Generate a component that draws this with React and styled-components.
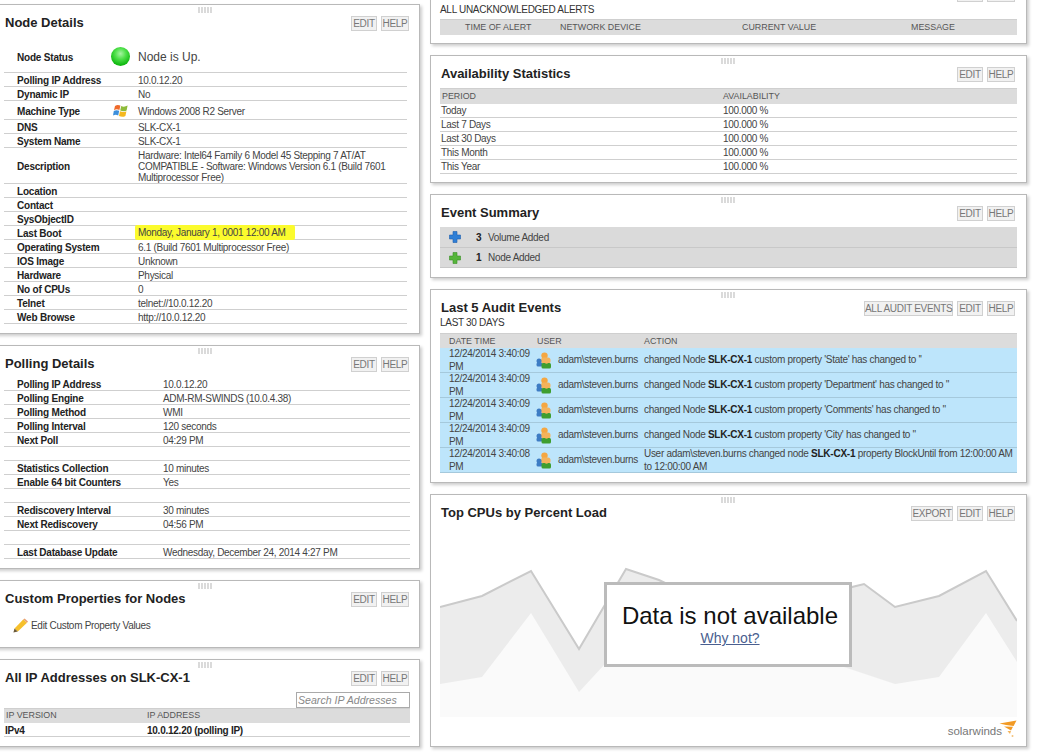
import React from 'react';
import styled, { createGlobalStyle } from 'styled-components';

const GlobalStyle = createGlobalStyle`
  html, body {
    margin: 0;
    padding: 0;
    height: 100%;
    overflow: hidden;
    background: #fff;
  }
  body {
    font-family: "Liberation Sans", Arial, sans-serif;
    font-size: 10px;
    letter-spacing: -0.3px;
    color: #333;
  }
`;

const Page = styled.div`
  display: flex;
  align-items: flex-start;
  gap: 10px;
  width: 1061px;
  height: 754px;
  overflow: hidden;
`;

const LeftColumn = styled.div`
  display: flex;
  flex-direction: column;
  gap: 11px;
  flex: none;
  width: 428px;
  margin: 4px 0 0 -8px;
`;

const RightColumn = styled.div`
  display: flex;
  flex-direction: column;
  gap: 11px;
  flex: none;
  width: 597px;
  margin-top: -25px;
`;

const Panel = styled.section`
  position: relative;
  box-sizing: border-box;
  height: ${(p) => p.$height}px;
  padding: 0 9px 0 ${(p) => (p.$narrow ? 11 : 9)}px;
  background: #fff;
  border: 1px solid #b9b9b9;
  box-shadow: 2px 2px 3px rgba(0, 0, 0, 0.2);
`;

const Grip = styled.div`
  position: absolute;
  top: 2px;
  left: 50%;
  width: 15px;
  height: 6px;
  margin-left: -8px;
  background-image: radial-gradient(circle at 1px 1px, #c6c6c6 0.6px, transparent 0.9px);
  background-size: 3px 2px;
`;

const Header = styled.header`
  display: flex;
  align-items: center;
  justify-content: space-between;
  height: 15px;
  padding-top: 11px;
`;

const Title = styled.h2`
  margin: -3px 0 0 1px;
  font-size: 13px;
  line-height: 15px;
  font-weight: bold;
  letter-spacing: 0;
  color: #222;
`;

const Buttons = styled.div`
  display: flex;
  gap: 4px;
  margin-right: ${(p) => (p.$inset ? 2 : 1)}px;
`;

const Button = styled.span`
  box-sizing: border-box;
  width: ${(p) => p.$width}px;
  height: 15px;
  font-size: 10px;
  line-height: 13px;
  letter-spacing: -0.3px;
  text-align: center;
  white-space: nowrap;
  color: #777;
  background: #f1f1f1;
  border: 1px solid #d0d0d0;
`;

const Subtitle = styled.div`
  margin-top: ${(p) => p.$top ?? 2}px;
  line-height: 12px;
  color: #333;
`;

const Table = styled.div`
  margin-top: ${(p) => p.$top || 0}px;
  margin-right: ${(p) => p.$right || 0}px;
`;

const HeadRow = styled.div`
  display: grid;
  grid-template-columns: ${(p) => p.$cols};
  align-items: center;
  box-sizing: border-box;
  height: ${(p) => p.$height || 15}px;
  padding-bottom: ${(p) => (p.$lift ? 2 : 0)}px;
  background: #dcdcdc;
  border-top: 1px solid #cfcfcf;
  font-size: 8.9px;
  letter-spacing: 0;
  color: #555;
`;

const HeadCell = styled.span`
  padding-left: ${(p) => p.$pad || 0}px;
  white-space: nowrap;
`;

const Row = styled.div`
  display: grid;
  grid-template-columns: ${(p) => p.$cols};
  align-items: center;
  box-sizing: border-box;
  height: ${(p) => p.$height || 14}px;
  padding-top: ${(p) => (p.$flat ? 0 : 2)}px;
  border-bottom: 1px solid #cfcfcf;
  line-height: 11px;
`;

const Label = styled.span`
  padding-left: 13px;
  font-weight: bold;
  letter-spacing: -0.2px;
  color: #222;
  white-space: nowrap;
`;

const Value = styled.span`
  color: #444;
`;

const StatusText = styled.span`
  font-size: 12px;
  letter-spacing: 0;
  color: #444;
`;

const Plain = styled.span`
  color: #444;
  padding-left: ${(p) => p.$pad || 0}px;
  white-space: nowrap;
`;

const Bold = styled.span`
  color: #222;
  font-weight: bold;
  letter-spacing: -0.25px;
`;

const Highlight = styled.span`
  display: block;
  width: fit-content;
  margin: -3px 0 -1px -3px;
  padding: 2px 9px 2px 3px;
  background: #fbfb2d;
  border-radius: 2px;
  white-space: nowrap;
`;

const IconCell = styled.span`
  display: flex;
  padding-left: ${(p) => p.$pad || 0}px;
`;

const Orb = styled.span`
  display: block;
  width: 19px;
  height: 19px;
  margin-top: -1px;
  border-radius: 50%;
  background: radial-gradient(circle at 50% 35%, #a6f3a2 0, #4fe04a 35%, #14bb14 70%, #0c9c0c 100%);
`;

const EditLink = styled.div`
  display: flex;
  align-items: center;
  gap: 3px;
  margin: 11px 0 0 9px;
  color: #444;
`;

const SearchRow = styled.div`
  display: flex;
  justify-content: flex-end;
  margin-top: 6px;
`;

const Search = styled.div`
  box-sizing: border-box;
  width: 114px;
  height: 16px;
  padding-left: 1px;
  border: 1px solid #aaa;
  font-size: 10.6px;
  line-height: 14px;
  font-style: italic;
  letter-spacing: 0;
  color: #888;
`;

const EventList = styled.div`
  margin-top: 6px;
  background: #dadada;
`;

const EventRow = styled.div`
  display: grid;
  grid-template-columns: 36px 12px 1fr;
  align-items: center;
  box-sizing: border-box;
  height: 20.5px;
  padding-top: 1px;
  border-bottom: 1px solid #c8c8c8;
  color: #444;
`;

const EventIcon = styled.span`
  display: flex;
  padding-left: 9px;
`;

const AuditRow = styled.div`
  display: grid;
  grid-template-columns: 96px 22px 86px 1fr;
  align-items: center;
  box-sizing: border-box;
  height: 25px;
  background: #bde5fb;
  border-bottom: 1px solid #a5c9dc;
  line-height: 12.5px;
  color: #444;
`;

const AuditCell = styled.span`
  padding-left: ${(p) => p.$pad || 0}px;
`;

const Chart = styled.div`
  position: relative;
  height: 157px;
  margin-top: 39px;
`;

const ChartSvg = styled.svg`
  display: block;
  width: 100%;
  height: 100%;
`;

const Message = styled.div`
  position: absolute;
  top: 22px;
  left: 164px;
  box-sizing: border-box;
  width: 248px;
  height: 85px;
  padding: 17px 0 0 4px;
  background: #fff;
  border: 3px solid #bbb;
  text-align: center;
  letter-spacing: 0;
`;

const MessageTitle = styled.div`
  font-size: 24px;
  line-height: 28px;
  color: #111;
`;

const WhyNot = styled.a`
  font-size: 14px;
  line-height: 16px;
  color: #4a5f8f;
  text-decoration: underline;
`;

const Logo = styled.div`
  display: flex;
  align-items: flex-start;
  justify-content: flex-end;
  margin-top: 3px;
`;

const LogoText = styled.span`
  margin: 4px -3px 0 0;
  font-size: 11.5px;
  line-height: 14px;
  letter-spacing: 0;
  color: #777;
`;

const WindowsIcon = () => (
  <svg width="16" height="16" viewBox="0 0 16 16">
    <path d="M2 3 C4 1.6 5.5 1.8 7.4 2.6 L6.4 7 C4.6 6.2 3 6 1 7.2 Z" fill="#ef6a2a" />
    <path d="M8.2 3 C10 4 12 4 14.6 2.6 L13.6 7.4 C11.4 8.6 9.4 8.4 7.2 7.4 Z" fill="#8ebb3a" />
    <path d="M0.8 8 C2.8 6.8 4.4 7 6.2 7.8 L5.2 12.4 C3.4 11.6 1.8 11.6 0 12.6 Z" fill="#3c8fdc" />
    <path d="M7 8.2 C9.2 9.2 11.2 9.4 13.4 8.2 L12.4 13 C10.2 14.2 8 14 6 13 Z" fill="#f5b81e" />
  </svg>
);

const PlusIcon = ({ fill, edge }) => (
  <svg width="12" height="12" viewBox="0 0 12 12">
    <path d="M4 0.5 H8 V4 H11.5 V8 H8 V11.5 H4 V8 H0.5 V4 H4 Z" fill={fill} stroke={edge} strokeWidth="0.6" />
  </svg>
);

const PencilIcon = () => (
  <svg width="15" height="15" viewBox="0 0 15 15">
    <path d="M1.5 10.5 L10.2 1.6 L14 4.8 L4.8 13.6 Z" fill="#f6c02c" />
    <path d="M10.2 1.6 L11.6 0.4 L15 3.4 L14 4.8 Z" fill="#e8a070" />
    <path d="M1.5 10.5 L0.4 14.6 L4.8 13.6 Z" fill="#6b5a3a" />
  </svg>
);

const UserIcon = () => (
  <svg width="16" height="17" viewBox="0 0 16 17">
    <circle cx="8.5" cy="3.6" r="3.2" fill="#f5a742" />
    <rect x="5" y="5.5" width="9.5" height="6" rx="2.5" fill="#f3b35c" />
    <circle cx="3" cy="9" r="2.5" fill="#3d7cc4" />
    <rect x="0.5" y="10.5" width="6" height="4" rx="1.5" fill="#3d7cc4" />
    <rect x="5.5" y="11" width="9.5" height="5.5" rx="1.5" fill="#3f9e2e" />
    <circle cx="10.5" cy="9.8" r="2" fill="#f5b25a" />
  </svg>
);

const SolarwindsMark = () => (
  <svg width="18" height="18" viewBox="0 0 18 18">
    <path d="M0.5 3.5 L17.5 0.5 L14.6 6 L7 5 Z" fill="#f29a24" />
    <path d="M5 6.5 L14 6.8 L12 10.5 Z" fill="#f29a24" />
    <path d="M8.5 11 L12 11 L11 14 Z" fill="#f5b45c" />
    <circle cx="13.5" cy="16" r="1" fill="#f5c27a" />
  </svg>
);

const nodeCols = '107px 27px 1fr';
const nodeRows = [
  { label: 'Polling IP Address', value: '10.0.12.20' },
  { label: 'Dynamic IP', value: 'No' },
  { label: 'Machine Type', value: 'Windows 2008 R2 Server', icon: <WindowsIcon />, height: 19 },
  { label: 'DNS', value: 'SLK-CX-1' },
  { label: 'System Name', value: 'SLK-CX-1' },
  {
    label: 'Description',
    value: 'Hardware: Intel64 Family 6 Model 45 Stepping 7 AT/AT COMPATIBLE - Software: Windows Version 6.1 (Build 7601 Multiprocessor Free)',
    height: 36,
  },
  { label: 'Location' },
  { label: 'Contact' },
  { label: 'SysObjectID' },
  { label: 'Last Boot', value: <Highlight>Monday, January 1, 0001 12:00 AM</Highlight> },
  { label: 'Operating System', value: '6.1 (Build 7601 Multiprocessor Free)' },
  { label: 'IOS Image', value: 'Unknown' },
  { label: 'Hardware', value: 'Physical' },
  { label: 'No of CPUs', value: '0' },
  { label: 'Telnet', value: 'telnet://10.0.12.20' },
  { label: 'Web Browse', value: 'http://10.0.12.20' },
];

const pollingRows = [
  ['Polling IP Address', '10.0.12.20'],
  ['Polling Engine', 'ADM-RM-SWINDS (10.0.4.38)'],
  ['Polling Method', 'WMI'],
  ['Polling Interval', '120 seconds'],
  ['Next Poll', '04:29 PM'],
  [],
  ['Statistics Collection', '10 minutes'],
  ['Enable 64 bit Counters', 'Yes'],
  [],
  ['Rediscovery Interval', '30 minutes'],
  ['Next Rediscovery', '04:56 PM'],
  [],
  ['Last Database Update', 'Wednesday, December 24, 2014 4:27 PM'],
];

const periods = ['Today', 'Last 7 Days', 'Last 30 Days', 'This Month', 'This Year'];

const audits = [
  { time: '12/24/2014 3:40:09 PM', text: <>changed Node <Bold>SLK-CX-1</Bold> custom property 'State' has changed to ''</> },
  { time: '12/24/2014 3:40:09 PM', text: <>changed Node <Bold>SLK-CX-1</Bold> custom property 'Department' has changed to ''</> },
  { time: '12/24/2014 3:40:09 PM', text: <>changed Node <Bold>SLK-CX-1</Bold> custom property 'Comments' has changed to ''</> },
  { time: '12/24/2014 3:40:09 PM', text: <>changed Node <Bold>SLK-CX-1</Bold> custom property 'City' has changed to ''</> },
  { time: '12/24/2014 3:40:08 PM', text: <>User adam\steven.burns changed node <Bold>SLK-CX-1</Bold> property BlockUntil from 12:00:00 AM to 12:00:00 AM</> },
];

const cpuLine = 'M440 607 L482 596 L531 571 L579 649 L626 569 L659 580 L700 600 L820 600 L852 587 L864 584 L895 607 L939 596 L986 571 L1017 621';

const PanelHeader = ({ title, extra, inset }) => (
  <Header>
    <Title>{title}</Title>
    <Buttons $inset={inset}>
      {extra && <Button $width={extra.width}>{extra.name}</Button>}
      <Button $width={26}>EDIT</Button>
      <Button $width={28}>HELP</Button>
    </Buttons>
  </Header>
);

export default function App() {
  return (
    <Page>
      <GlobalStyle />
      <LeftColumn>
        <Panel $narrow $height={330}>
          <Grip />
          <PanelHeader title="Node Details" />
          <Table $top={11} $right={3}>
            <Row $cols={nodeCols} $height={31} $flat>
              <Label>Node Status</Label>
              <IconCell><Orb /></IconCell>
              <StatusText>Node is Up.</StatusText>
            </Row>
            {nodeRows.map((row) => (
              <Row key={row.label} $cols={nodeCols} $height={row.height}>
                <Label>{row.label}</Label>
                <IconCell $pad={2}>{row.icon}</IconCell>
                <Value>{row.value}</Value>
              </Row>
            ))}
          </Table>
        </Panel>

        <Panel $narrow $height={224}>
          <Grip />
          <PanelHeader title="Polling Details" />
          <Table $top={5}>
            {pollingRows.map(([label, value], i) => (
              <Row key={i} $cols="159px 1fr">
                <Label>{label}</Label>
                <Value>{value}</Value>
              </Row>
            ))}
          </Table>
        </Panel>

        <Panel $narrow $height={68}>
          <Grip />
          <PanelHeader title="Custom Properties for Nodes" />
          <EditLink>
            <PencilIcon />
            <span>Edit Custom Property Values</span>
          </EditLink>
        </Panel>

        <Panel $narrow $height={88}>
          <Grip />
          <PanelHeader title="All IP Addresses on SLK-CX-1" />
          <SearchRow><Search>Search IP Addresses</Search></SearchRow>
          <HeadRow $cols="142px 1fr" $lift>
            <HeadCell $pad={2}>IP VERSION</HeadCell>
            <HeadCell $pad={1}>IP ADDRESS</HeadCell>
          </HeadRow>
          <Row $cols="142px 1fr">
            <Plain $pad={1}><Bold>IPv4</Bold></Plain>
            <Plain $pad={1}><Bold>10.0.12.20 (polling IP)</Bold></Plain>
          </Row>
        </Panel>
      </LeftColumn>

      <RightColumn>
        <Panel $height={69}>
          <PanelHeader inset />
          <Subtitle>ALL UNACKNOWLEDGED ALERTS</Subtitle>
          <Table $top={3}>
            <HeadRow $cols="120px 182px 169px 1fr" $height={16} $lift>
              <HeadCell $pad={25}>TIME OF ALERT</HeadCell>
              <HeadCell>NETWORK DEVICE</HeadCell>
              <HeadCell>CURRENT VALUE</HeadCell>
              <HeadCell>MESSAGE</HeadCell>
            </HeadRow>
          </Table>
        </Panel>

        <Panel $height={128}>
          <Grip />
          <PanelHeader title="Availability Statistics" inset />
          <Table $top={6}>
            <HeadRow $cols="283px 1fr" $height={16} $lift>
              <HeadCell $pad={2}>PERIOD</HeadCell>
              <HeadCell>AVAILABILITY</HeadCell>
            </HeadRow>
            {periods.map((period) => (
              <Row key={period} $cols="283px 1fr" $flat>
                <Plain $pad={1}>{period}</Plain>
                <Plain>100.000 %</Plain>
              </Row>
            ))}
          </Table>
        </Panel>

        <Panel $height={84}>
          <Grip />
          <PanelHeader title="Event Summary" inset />
          <EventList>
            <EventRow>
              <EventIcon><PlusIcon fill="#2f7fd6" edge="#1f5fae" /></EventIcon>
              <Bold>3</Bold>
              <span>Volume Added</span>
            </EventRow>
            <EventRow>
              <EventIcon><PlusIcon fill="#55b53a" edge="#3a8f26" /></EventIcon>
              <Bold>1</Bold>
              <span>Node Added</span>
            </EventRow>
          </EventList>
        </Panel>

        <Panel $height={194}>
          <Grip />
          <PanelHeader title="Last 5 Audit Events" extra={{ name: 'ALL AUDIT EVENTS', width: 89 }} inset />
          <Subtitle $top={1}>LAST 30 DAYS</Subtitle>
          <Table $top={4}>
            <HeadRow $cols="97px 107px 1fr">
              <HeadCell $pad={9}>DATE TIME</HeadCell>
              <HeadCell>USER</HeadCell>
              <HeadCell>ACTION</HeadCell>
            </HeadRow>
            {audits.map((audit, i) => (
              <AuditRow key={i}>
                <AuditCell $pad={9}>{audit.time}</AuditCell>
                <IconCell><UserIcon /></IconCell>
                <AuditCell>adam\steven.burns</AuditCell>
                <AuditCell>{audit.text}</AuditCell>
              </AuditRow>
            ))}
          </Table>
        </Panel>

        <Panel $height={253}>
          <Grip />
          <PanelHeader title="Top CPUs by Percent Load" extra={{ name: 'EXPORT', width: 42 }} inset />
          <Chart>
            <ChartSvg viewBox="440 560 577 157" preserveAspectRatio="none">
              <path d={`${cpuLine} V717 H440 Z`} fill="#ececec" />
              <path d={cpuLine} fill="none" stroke="#cacaca" strokeWidth="2" />
              <path
                d="M440 684 L482 677 L531 613 L579 692 L604 665 L838 665 L895 684 L939 677 L986 613 L1017 662 V717 H440 Z"
                fill="#fafafa"
              />
            </ChartSvg>
            <Message>
              <MessageTitle>Data is not available</MessageTitle>
              <WhyNot href="#">Why not?</WhyNot>
            </Message>
          </Chart>
          <Logo>
            <LogoText>solarwinds</LogoText>
            <SolarwindsMark />
          </Logo>
        </Panel>
      </RightColumn>
    </Page>
  );
}
